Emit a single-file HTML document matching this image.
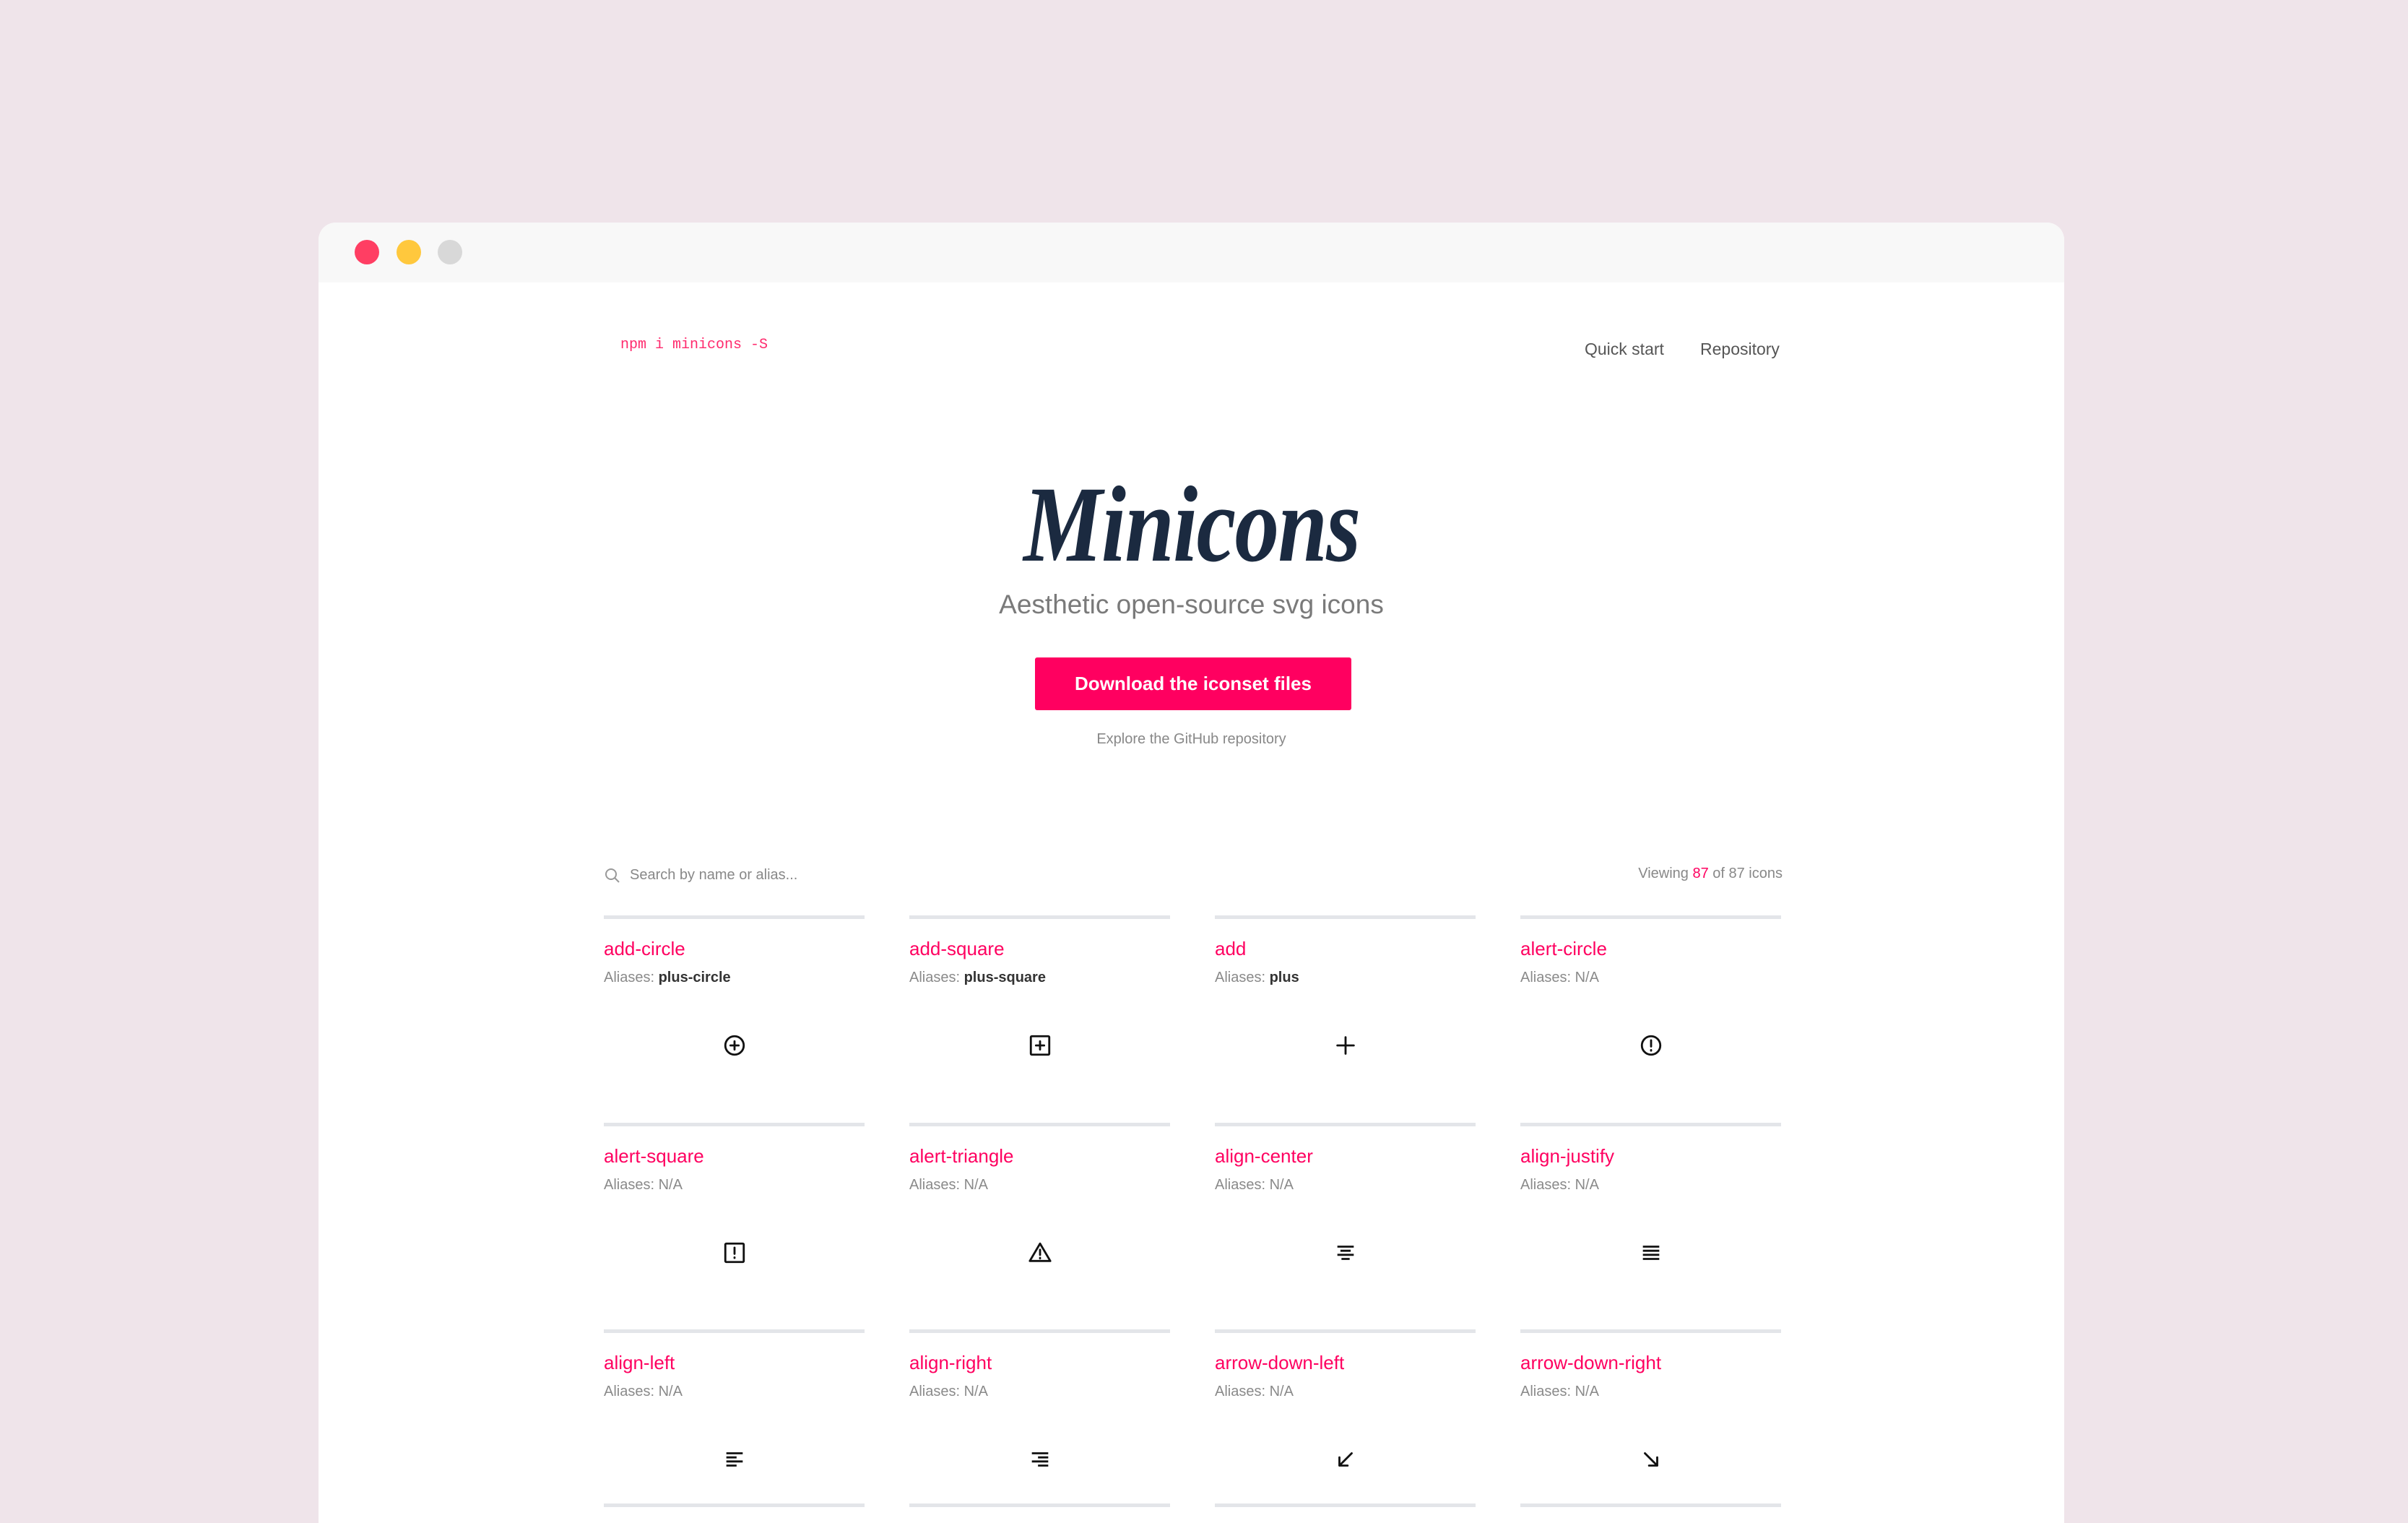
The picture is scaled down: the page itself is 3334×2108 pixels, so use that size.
<!DOCTYPE html>
<html><head><meta charset="utf-8"><style>
*{margin:0;padding:0;box-sizing:border-box}
html,body{width:3334px;height:2084px;overflow:hidden;background:#efe4ea;font-family:"Liberation Sans",sans-serif}
.win{position:absolute;left:441px;top:308px;width:2417px;height:1800px;background:#fff;border-radius:24px 24px 0 0;overflow:hidden}
.bar{height:83px;background:#f8f8f8}
.dot{position:absolute;top:24px;width:34px;height:34px;border-radius:50%}
.a{position:absolute;white-space:nowrap}
.npm{left:418px;top:158px;font-family:"Liberation Mono",monospace;font-size:20px;color:#ff2a6d}
.nav{top:162px;font-size:23px;color:#555}
.logo{left:0;width:2417px;text-align:center;top:332px}
.logo span{display:inline-block;font-family:"Liberation Serif",serif;font-style:italic;font-weight:bold;font-size:150px;color:#1b2a40;transform:scaleX(0.82);letter-spacing:-2px}
.sub{left:0;width:2417px;text-align:center;top:508px;font-size:37px;color:#7a7a7a}
.btn{left:992px;top:602px;width:438px;height:73px;background:#ff0060;border-radius:3px;color:#fff;font-size:26px;font-weight:bold;text-align:center;line-height:73px}
.exp{left:0;width:2417px;text-align:center;top:704px;font-size:20px;color:#888}
.search{left:431px;top:892px;font-size:20px;color:#888}
.view{right:390px;top:890px;font-size:20px;color:#888}
.cell{position:absolute;width:361px;border-top:5px solid #e3e5e9}
.cell .n{position:absolute;left:0;top:26px;font-size:26px;color:#ff0060;white-space:nowrap}
.cell .al{position:absolute;left:0;top:70px;font-size:20px;color:#8a8a8a;white-space:nowrap}
.cell .al b{color:#333;font-weight:bold}
.cell svg{position:absolute;left:164px;top:158px;width:34px;height:34px}
</style></head><body>
<div class="win">
<div class="bar"></div>
<div class="dot" style="left:50px;background:#ff3e63"></div>
<div class="dot" style="left:108px;background:#ffc83d"></div>
<div class="dot" style="left:165px;background:#d8d8d8"></div>
<div class="a npm">npm i minicons -S</div>
<div class="a nav" style="left:1753px">Quick start</div>
<div class="a nav" style="left:1913px">Repository</div>
<div class="a logo"><span>Minicons</span></div>
<div class="a sub">Aesthetic open-source svg icons</div>
<div class="a btn">Download the iconset files</div>
<div class="a exp">Explore the GitHub repository</div>
<svg class="a" style="left:395px;top:892px" width="24" height="24" viewBox="0 0 24 24" fill="none" stroke="#999" stroke-width="2"><circle cx="10" cy="10" r="7"/><path d="M15 15l6 6"/></svg>
<div class="a search">Search by name or alias...</div>
<div class="a view">Viewing <span style="color:#ff0060">87</span> of 87 icons</div>

<div class="cell" style="left:395px;top:959px"><div class="n">add-circle</div><div class="al">Aliases: <b>plus-circle</b></div><svg viewBox="0 0 24 24" fill="none" stroke="#111" stroke-width="2" stroke-linecap="round"><circle cx="12" cy="12" r="9"/><path d="M12 8v8M8 12h8"/></svg></div>
<div class="cell" style="left:818px;top:959px"><div class="n">add-square</div><div class="al">Aliases: <b>plus-square</b></div><svg viewBox="0 0 24 24" fill="none" stroke="#111" stroke-width="2" stroke-linecap="round"><rect x="3" y="3" width="18" height="18" rx="1"/><path d="M12 8v8M8 12h8"/></svg></div>
<div class="cell" style="left:1241px;top:959px"><div class="n">add</div><div class="al">Aliases: <b>plus</b></div><svg viewBox="0 0 24 24" fill="none" stroke="#111" stroke-width="2" stroke-linecap="round"><path d="M12 4v16M4 12h16"/></svg></div>
<div class="cell" style="left:1664px;top:959px"><div class="n">alert-circle</div><div class="al">Aliases: N/A</div><svg viewBox="0 0 24 24" fill="none" stroke="#111" stroke-width="2" stroke-linecap="round"><circle cx="12" cy="12" r="9"/><path d="M12 7v6M12 16.5v.5"/></svg></div>

<div class="cell" style="left:395px;top:1246px"><div class="n">alert-square</div><div class="al">Aliases: N/A</div><svg viewBox="0 0 24 24" fill="none" stroke="#111" stroke-width="2" stroke-linecap="round"><rect x="3" y="3" width="18" height="18" rx="1"/><path d="M12 7v6M12 16.5v.5"/></svg></div>
<div class="cell" style="left:818px;top:1246px"><div class="n">alert-triangle</div><div class="al">Aliases: N/A</div><svg viewBox="0 0 24 24" fill="none" stroke="#111" stroke-width="2" stroke-linecap="round" stroke-linejoin="round"><path d="M12 3L2 20h20z"/><path d="M12 9v5M12 17v.5"/></svg></div>
<div class="cell" style="left:1241px;top:1246px"><div class="n">align-center</div><div class="al">Aliases: N/A</div><svg viewBox="0 0 24 24" fill="none" stroke="#111" stroke-width="2"><path d="M4 6h16M7 10h10M4 14h16M8 18h8"/></svg></div>
<div class="cell" style="left:1664px;top:1246px"><div class="n">align-justify</div><div class="al">Aliases: N/A</div><svg viewBox="0 0 24 24" fill="none" stroke="#111" stroke-width="2"><path d="M4 6h16M4 10h16M4 14h16M4 18h16"/></svg></div>

<div class="cell" style="left:395px;top:1532px"><div class="n">align-left</div><div class="al">Aliases: N/A</div><svg viewBox="0 0 24 24" fill="none" stroke="#111" stroke-width="2"><path d="M4 6h16M4 10h10M4 14h16M4 18h10"/></svg></div>
<div class="cell" style="left:818px;top:1532px"><div class="n">align-right</div><div class="al">Aliases: N/A</div><svg viewBox="0 0 24 24" fill="none" stroke="#111" stroke-width="2"><path d="M4 6h16M10 10h10M4 14h16M10 18h10"/></svg></div>
<div class="cell" style="left:1241px;top:1532px"><div class="n">arrow-down-left</div><div class="al">Aliases: N/A</div><svg viewBox="0 0 24 24" fill="none" stroke="#111" stroke-width="2" stroke-linecap="round" stroke-linejoin="round"><path d="M18 6L6 18M6 10v8h8"/></svg></div>
<div class="cell" style="left:1664px;top:1532px"><div class="n">arrow-down-right</div><div class="al">Aliases: N/A</div><svg viewBox="0 0 24 24" fill="none" stroke="#111" stroke-width="2" stroke-linecap="round" stroke-linejoin="round"><path d="M6 6l12 12M18 10v8h-8"/></svg></div>

<div class="cell" style="left:395px;top:1773px"></div>
<div class="cell" style="left:818px;top:1773px"></div>
<div class="cell" style="left:1241px;top:1773px"></div>
<div class="cell" style="left:1664px;top:1773px"></div>
</div>
</body></html>
